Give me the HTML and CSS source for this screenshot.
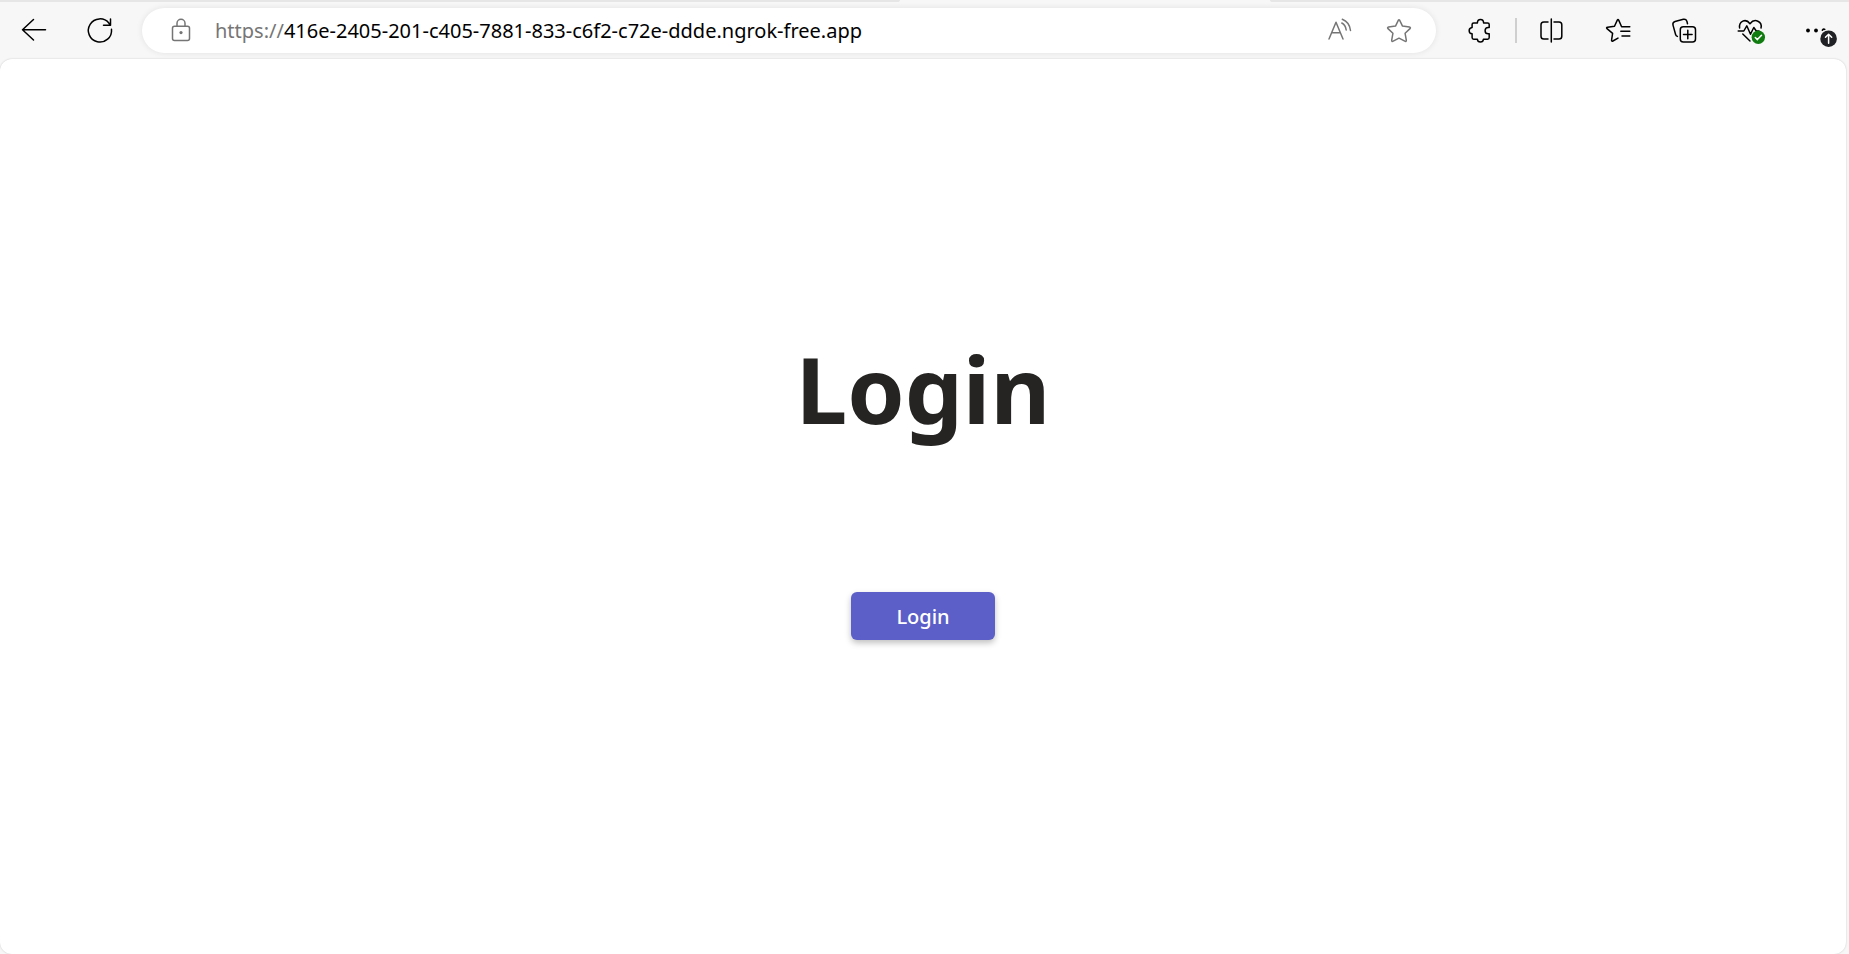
FILE: index.html
```html
<!DOCTYPE html>
<html lang="en">
<head>
<meta charset="utf-8">
<meta name="viewport" content="width=device-width, initial-scale=1">
<title>Login</title>
<link rel="stylesheet" href="styles.css">
</head>
<body class="browser">
<div class="tab-strip"><span class="tab-side-left"></span><span class="tab-side-right"></span></div>
<header class="toolbar">
  <nav class="nav-group" aria-label="Navigation">
    <button class="icon-button" type="button" aria-label="Back"><svg viewBox="0 0 32 32"><path d="M27.5 15.7H4.5M15.5 5.5L4.5 15.7L15.5 26"/></svg></button>
    <button class="icon-button" type="button" aria-label="Refresh"><svg viewBox="0 0 32 32"><path d="M27.5 15.3A11.6 11.6 0 1 1 25 9.2L26.5 11.3M26.5 5V11.3H19.5"/></svg></button>
  </nav>
  <form class="address-bar">
    <button class="icon-button muted" type="button" aria-label="Site information"><svg viewBox="0 0 32 32"><rect x="7.5" y="12.3" width="17" height="14.2" rx="2"/><path d="M12 12V9.3a4 4 0 0 1 8 0V12"/><circle class="solid" cx="16" cy="18.6" r="1.6"/></svg></button>
    <p class="url"><span class="scheme">https://</span>416e-2405-201-c405-7881-833-c6f2-c72e-ddde.ngrok-free.app</p>
    <button class="icon-button muted" type="button" aria-label="Read aloud"><svg viewBox="0 0 32 32"><path d="M5 25L12 8.2L19 25M7.7 18.8H16.4M18.3 5.2C22.7 7 26 11.3 26.5 16.5M17.8 9C20.2 10.3 21.8 12.8 22.2 16"/></svg></button>
    <button class="icon-button muted" type="button" aria-label="Add to favorites"><svg viewBox="0 0 32 32"><path d="M15.4 6.2Q16 5.1 16.6 6.2L19.5 12.1L26.4 13.1Q28.1 13.5 27 14.6L22.1 19.3L23.3 26.2Q23.4 28 21.8 27.2L16 24.2L10.2 27.2Q8.6 28 8.7 26.2L9.9 19.3L5 14.6Q3.9 13.5 5.6 13.1L12.5 12.1Z"/></svg></button>
  </form>
  <button class="icon-button" type="button" aria-label="Extensions"><svg viewBox="0 0 32 32"><path d="M9.7 9H13.4C13.4 4.3 19.6 4.3 19.6 9H23.6Q25.2 9 25.2 10.6V13.6H24.2A3.1 3.1 0 0 0 24.2 19.8H25.2V23.6Q25.2 25.2 23.6 25.2H19.4C19.2 29 13.6 29 13.4 25.2H9.7Q8.1 25.2 8.1 23.6V19.8C4.2 19.5 4.2 14 8.1 13.6V10.6Q8.1 9 9.7 9Z"/></svg></button>
  <span class="divider"></span>
  <div class="tool-group">
    <button class="icon-button" type="button" aria-label="Split screen"><svg viewBox="0 0 32 32"><path d="M14 8H9.8Q7 8 7 10.8V22.2Q7 25 9.8 25H14M20 8H25Q27.8 8 27.8 10.8V22.2Q27.8 25 25 25H20M17.3 5V28"/></svg></button>
    <button class="icon-button" type="button" aria-label="Favorites"><svg viewBox="0 0 32 32"><path d="M17 24.1L11.9 27Q10.3 27.6 10.6 25.9L11.6 19.3L6 14.7Q4.9 13.5 6.6 13.2L13.5 12.2L16.3 6.1Q17 5 17.7 6.1L20.6 12.7H28.8M19.8 17.3H28.8M21 22H28.8"/></svg></button>
    <button class="icon-button" type="button" aria-label="Collections"><svg viewBox="0 0 32 32"><rect x="12.3" y="12.8" width="15.2" height="15.2" rx="3"/><path d="M19.8 16.2V24.8M15.5 20.5H24.1M9.4 22.4Q8 22 7.6 20.5L5 11.1Q4.3 8.3 7 7.5L15.4 5.3Q18 4.8 18.9 7.2L19.5 9.7"/></svg></button>
    <button class="icon-button" type="button" aria-label="Browser essentials"><svg viewBox="0 0 32 32"><path d="M4.6 14C3.7 7.5 10.6 3.7 15 9.7C19.8 3.5 27.5 7.8 26 14M3.2 17H8.8L11.8 11.8L15.5 20.2L18.8 13.5L21.3 17H24M7.8 20L15 27"/><circle class="badge-ok" cx="23.3" cy="23.3" r="6.7"/><path class="badge-mark" d="M20.3 23.5L22.4 25.6L26.5 21.2"/></svg></button>
    <button class="icon-button" type="button" aria-label="Settings and more"><svg viewBox="0 0 32 32"><circle class="solid" cx="6" cy="16.5" r="1.9"/><circle class="solid" cx="14" cy="16.5" r="1.9"/><path d="M20.3 16.2Q21.5 14.6 22.8 15.4"/><circle class="badge-update" cx="26.6" cy="24.7" r="8.3"/><path class="badge-mark" d="M26.6 29.2V20.4M23.5 23.3L26.6 20.2L29.7 23.3"/></svg></button>
  </div>
</header>
<main class="page">
  <h1 class="title">Login</h1>
  <button class="login-button" type="button">Login</button>
</main>
</body>
</html>
```
FILE: styles.css
```css
* {
  box-sizing: border-box;
}

.browser {
  display: flex;
  flex-direction: column;
  min-height: 100vh;
  margin: 0;
  background: #f7f7f7;
  font-family: "Noto Sans", "Open Sans", sans-serif;
  color: #000;
}

.tab-strip {
  display: flex;
  justify-content: space-between;
  height: 2px;
}

.tab-side-left {
  width: 48.7%;
  background: #e6e6e6;
  border-bottom-right-radius: 2px;
}

.tab-side-right {
  width: 31.3%;
  background: #e6e6e6;
  border-bottom-left-radius: 2px;
}

.toolbar {
  display: flex;
  align-items: center;
  height: 57px;
  padding: 0 15px 0 18px;
}

.nav-group {
  display: flex;
  gap: 34px;
}

.tool-group {
  display: flex;
  gap: 35px;
}

.icon-button {
  display: flex;
  flex: none;
  align-items: flex-start;
  width: 32px;
  height: 33px;
  padding: 0;
  border: 0;
  background: none;
  color: #000;
}

.icon-button svg {
  display: block;
  width: 32px;
  height: 32px;
  overflow: visible;
  fill: none;
  stroke: currentColor;
  stroke-width: 1.5;
  stroke-linecap: round;
  stroke-linejoin: round;
}

.icon-button .solid {
  fill: currentColor;
  stroke: none;
}

.icon-button .badge-ok {
  fill: #107c10;
  stroke: none;
}

.icon-button .badge-update {
  fill: #202124;
  stroke: none;
}

.icon-button .badge-mark {
  stroke: #fff;
}

.muted {
  color: #757575;
}

.address-bar {
  display: flex;
  flex: 1;
  align-items: center;
  height: 45px;
  margin: 0 28px 0 26px;
  padding: 0 21px 0 23px;
  border-radius: 23px;
  background: #fff;
  box-shadow: 0 0 6px rgba(0, 0, 0, 0.09);
}

.address-bar .icon-button + .icon-button {
  margin-left: 27px;
}

.url {
  flex: 1;
  margin: 0 18px;
  font-size: 20px;
  line-height: 28px;
  white-space: nowrap;
}

.scheme {
  color: #767676;
}

.divider {
  width: 2px;
  height: 25px;
  margin: 0 17px 0 19px;
  background: #cfcfcf;
}

.page {
  display: flex;
  flex: 1;
  flex-direction: column;
  align-items: center;
  margin-right: 3px;
  padding-top: 265px;
  border-radius: 12px;
  background: #fff;
  box-shadow: 0 0 2px rgba(0, 0, 0, 0.2);
}

.title {
  margin: 0 0 138px;
  color: #252423;
  font-size: 92px;
  font-weight: 700;
  line-height: 130px;
}

.login-button {
  width: 144px;
  height: 48px;
  padding: 2px 0 0;
  border: 0;
  border-radius: 6px;
  background: #5b5fc7;
  box-shadow: 0 3px 6px rgba(0, 0, 0, 0.25);
  color: #fff;
  font-family: inherit;
  font-size: 20px;
  font-weight: 500;
  line-height: 28px;
}
```
